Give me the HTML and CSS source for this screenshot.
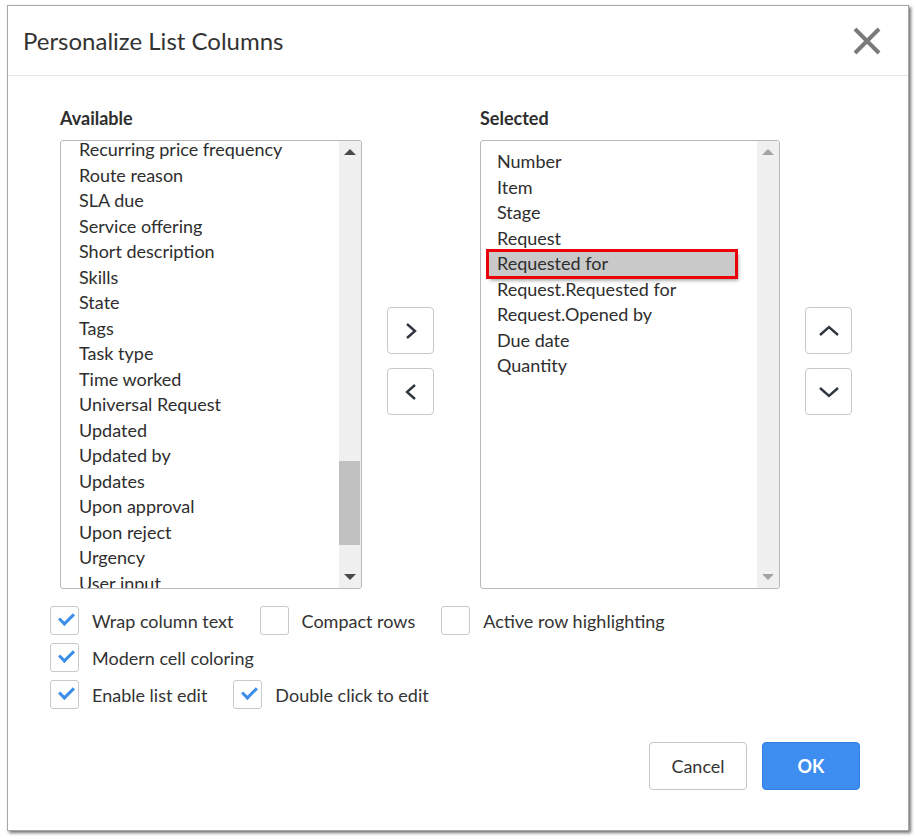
FILE: index.html
```html
<!DOCTYPE html>
<html>
<head>
<meta charset="utf-8">
<link rel="stylesheet" href="styles.css">
</head>
<body>
<div class="dialog">
  <div class="header">
    <h1 class="title">Personalize List Columns</h1>
    <button class="close" aria-label="Close">
      <svg width="30" height="30" viewBox="0 0 30 30"><path d="M3 3 L27 27 M27 3 L3 27" stroke="#7a7a7a" stroke-width="4" fill="none"/></svg>
    </button>
  </div>
  <div class="content">
    <div class="columns">
      <div class="col col-avail">
        <div class="label">Available</div>
        <div class="listbox">
          <div class="items avail-items">
            <div class="opt">Recurring price frequency</div>
            <div class="opt">Route reason</div>
            <div class="opt">SLA due</div>
            <div class="opt">Service offering</div>
            <div class="opt">Short description</div>
            <div class="opt">Skills</div>
            <div class="opt">State</div>
            <div class="opt">Tags</div>
            <div class="opt">Task type</div>
            <div class="opt">Time worked</div>
            <div class="opt">Universal Request</div>
            <div class="opt">Updated</div>
            <div class="opt">Updated by</div>
            <div class="opt">Updates</div>
            <div class="opt">Upon approval</div>
            <div class="opt">Upon reject</div>
            <div class="opt">Urgency</div>
            <div class="opt">User input</div>
          </div>
          <div class="scrollbar">
            <span class="arrow up dark"></span>
            <span class="track"><span class="thumb"></span></span>
            <span class="arrow down dark"></span>
          </div>
        </div>
      </div>
      <div class="movers">
        <button class="mbtn"><svg width="16" height="20" viewBox="0 0 16 20"><path d="M4 3 L12 10 L4 17" stroke="#2f3640" stroke-width="2.4" fill="none"/></svg></button>
        <button class="mbtn"><svg width="16" height="20" viewBox="0 0 16 20"><path d="M12 3 L4 10 L12 17" stroke="#2f3640" stroke-width="2.4" fill="none"/></svg></button>
      </div>
      <div class="col col-sel">
        <div class="label">Selected</div>
        <div class="listbox">
          <div class="items sel-items">
            <div class="opt">Number</div>
            <div class="opt">Item</div>
            <div class="opt">Stage</div>
            <div class="opt">Request</div>
            <div class="opt hl">Requested for</div>
            <div class="opt">Request.Requested for</div>
            <div class="opt">Request.Opened by</div>
            <div class="opt">Due date</div>
            <div class="opt">Quantity</div>
          </div>
          <div class="scrollbar">
            <span class="arrow up light"></span>
            <span class="track"></span>
            <span class="arrow down light"></span>
          </div>
        </div>
      </div>
      <div class="movers movers-ud">
        <button class="mbtn"><svg width="22" height="16" viewBox="0 0 22 16"><path d="M2 12 L11 4 L20 12" stroke="#2f3640" stroke-width="2.4" fill="none"/></svg></button>
        <button class="mbtn"><svg width="22" height="16" viewBox="0 0 22 16"><path d="M2 4 L11 12 L20 4" stroke="#2f3640" stroke-width="2.4" fill="none"/></svg></button>
      </div>
    </div>

    <div class="options">
      <div class="row">
        <label class="cb"><span class="box on"></span><span class="cbt">Wrap column text</span></label>
        <label class="cb"><span class="box"></span><span class="cbt">Compact rows</span></label>
        <label class="cb"><span class="box"></span><span class="cbt">Active row highlighting</span></label>
      </div>
      <div class="row">
        <label class="cb"><span class="box on"></span><span class="cbt">Modern cell coloring</span></label>
      </div>
      <div class="row">
        <label class="cb"><span class="box on"></span><span class="cbt">Enable list edit</span></label>
        <label class="cb"><span class="box on"></span><span class="cbt">Double click to edit</span></label>
      </div>
    </div>

    <div class="footer">
      <button class="fbtn cancel">Cancel</button>
      <button class="fbtn ok">OK</button>
    </div>
  </div>
</div>
</body>
</html>
```

FILE: styles.css
```css
html, body {
  margin: 0;
  padding: 0;
  background: #ffffff;
}
body {
  font-family: "Lato", "Open Sans", sans-serif;
  color: #2e2e2e;
  width: 916px;
  height: 839px;
  overflow: hidden;
}
.dialog {
  box-sizing: border-box;
  margin: 5px 0 0 7px;
  width: 902px;
  height: 826px;
  border: 1px solid #a8a8a8;
  box-shadow: 2px 2px 3px rgba(0,0,0,0.55);
  background: #fff;
}
.header {
  height: 69px;
  border-bottom: 1px solid #e6e6e6;
  display: flex;
  align-items: center;
  justify-content: space-between;
  padding: 0 26px 0 15px;
}
.title {
  margin: 0;
  font-size: 24px;
  font-weight: 400;
  color: #333;
}
.close {
  border: 0;
  background: none;
  padding: 0;
  width: 30px;
  height: 30px;
  display: block;
}
.content {
  padding: 0 0 0 42px;
}
.columns {
  display: flex;
  padding-top: 32px;
}
.col-avail { margin-left: 10px; }
.label {
  font-size: 18px;
  font-weight: 700;
  color: #2e2e2e;
  height: 32px;
  line-height: 20px;
}
.listbox {
  box-sizing: border-box;
  height: 449px;
  border: 1px solid #b8b8b8;
  border-radius: 3px;
  display: flex;
  overflow: hidden;
}
.col-avail .listbox { width: 302px; }
.col-sel .listbox { width: 300px; }
.items {
  flex: 1;
  overflow: hidden;
  font-size: 18px;
  line-height: 25.5px;
}
.avail-items { padding: 0 0 0 18px; margin-top: -4px; }
.sel-items { padding: 8px 0 0 0; }
.sel-items .opt { margin-left: 7px; padding-left: 9px; width: 248px; box-sizing: border-box; }
.opt { white-space: nowrap; }
.opt.hl {
  background: #c9c9c9;
  outline: 3px solid #e8000b;
  outline-offset: -1px;
  box-shadow: 2px 3px 4px rgba(0,0,0,0.45);
}
.scrollbar {
  width: 22px;
  background: #f0f0f0;
  display: flex;
  flex-direction: column;
  align-items: center;
}
.track { flex: 1; width: 100%; position: relative; }
.thumb {
  position: absolute;
  left: 0;
  right: 1px;
  top: 298px;
  height: 84px;
  background: #c1c1c1;
}
.arrow {
  width: 0; height: 0;
  border-left: 6px solid transparent;
  border-right: 6px solid transparent;
  margin: 8px 0;
}
.arrow.up.dark { border-bottom: 6px solid #4a4a4a; }
.arrow.down.dark { border-top: 6px solid #4a4a4a; }
.arrow.up.light { border-bottom: 6px solid #a3a3a3; }
.arrow.down.light { border-top: 6px solid #a3a3a3; }
.movers {
  display: flex;
  flex-direction: column;
  gap: 14px;
  margin: 199px 46px 0 25px;
}
.movers-ud { margin-right: 0; }
.mbtn {
  box-sizing: border-box;
  width: 47px;
  height: 47px;
  border: 1px solid #c8c8c8;
  border-radius: 4px;
  background: #fff;
  display: flex;
  align-items: center;
  justify-content: center;
  padding: 0;
}
.options {
  margin-top: 17px;
  display: flex;
  flex-direction: column;
  gap: 8px;
}
.row { display: flex; gap: 0; height: 29px; }
.cb {
  display: flex;
  align-items: center;
  margin-right: 26px;
  font-size: 18px;
  color: #333;
}
.box {
  box-sizing: border-box;
  width: 29px;
  height: 29px;
  border: 1px solid #c9c9c9;
  border-radius: 3px;
  margin-right: 13px;
  position: relative;
  flex: none;
}
.box.on::after {
  content: "";
  position: absolute;
  left: 8px;
  top: 6px;
  width: 12px;
  height: 6px;
  border-left: 3px solid #3c8ee9;
  border-bottom: 3px solid #3c8ee9;
  transform: rotate(-45deg);
  transform-origin: center;
}
.footer {
  display: flex;
  justify-content: flex-end;
  gap: 15px;
  margin-top: 33px;
  padding-right: 48px;
}
.fbtn {
  box-sizing: border-box;
  width: 98px;
  height: 48px;
  border-radius: 4px;
  font-family: "Lato", "Open Sans", sans-serif;
  font-size: 18px;
}
.cancel { background: #fff; border: 1px solid #c6c6c6; color: #333; }
.ok { background: #3d8ef0; border: 1px solid #2f7fe0; color: #fff; font-weight: 700; }
```
